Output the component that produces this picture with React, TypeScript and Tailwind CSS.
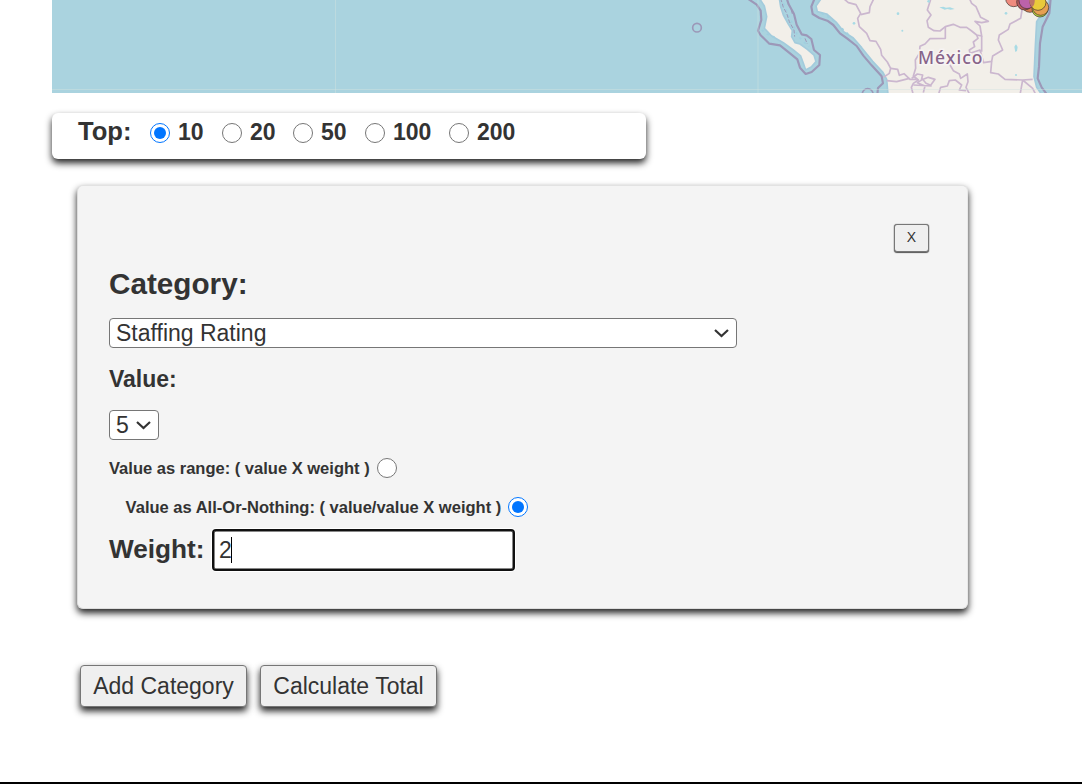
import type { ReactNode } from "react";

const border = { fill: "none", stroke: "#cbb7cf", strokeWidth: 5, strokeLinejoin: "round" } as const;
const coast = { fill: "none", stroke: "#9c98b8", strokeWidth: 6.5, strokeLinejoin: "round" } as const;

function MapStrip() {
  return (
    <svg className="block h-[93px] w-[1030px] bg-[#aad3df]" viewBox="52 0 1030 93">
      <g transform="translate(680 0) scale(0.33333)">
        <g stroke="#a3cbdc" strokeWidth="5" fill="#f2efe9" strokeLinejoin="round">
          <path d="M238 -5L253 18L260 50L253 85L275 108L310 128L340 150L362 168L370 190L377 210L395 200L408 185L402 165L382 148L360 132L345 128L335 110L337 92L325 72L310 45L302 20L298 -5Z" />
          <path d="M424 -5L408 18L412 35L440 42L470 68L492 96L520 114L545 143L578 184L608 216L620 238L624 285L1086 285L1070 262L1062 230L1066 140L1070 65L1105 10L1105 -5Z" />
        </g>
        <g fill="none" stroke="#9fcfdf" strokeWidth="5" strokeDasharray="7 12">
          <path d="M310 10L325 45L340 75L352 105L370 125L388 140" />
          <path d="M425 40L452 55L480 80L510 108" />
          <path d="M245 90L262 103L285 112" />
        </g>
        <path {...coast} d="M202 -5L230 14L242 32L244 60L234 92L242 106L268 131L300 136L330 160L352 178L360 203L377 222L395 216L418 195L420 165L402 150L394 117L380 106L365 103L350 74L342 42L326 13L320 -5" />
        <path {...coast} strokeWidth={3} strokeDasharray="12 5" d="M302 -5L310 22L320 40L328 65L342 90L344 110M334 30L338 46M375 115L382 132" />
        <path {...coast} d="M404 -5L394 20L398 42L418 54L442 62L460 75L480 100L502 116L530 138L550 167L575 196L605 229L609 250L594 264L592 285" />
        <path {...coast} d="M1112 -5L1108 40L1088 80L1080 130L1077 200L1073 235L1085 262L1102 285" />
        <circle {...coast} strokeWidth={5} cx="51" cy="83" r="13" />
        <circle {...coast} strokeWidth={5} cx="563" cy="282" r="16" />
        <path {...border} d="M490 -5L505 8L528 14L542 40L533 55L538 80L560 100L570 122L588 124L602 148L605 166L622 186L632 205L628 220L610 232" />
        <path {...border} d="M582 -5L570 20L568 38L542 44M632 205L653 208L658 226L672 221L690 238L710 238" />
        <path {...border} d="M753 -5L742 30L753 45L741 62L745 82L762 92L780 93L796 80L820 73L840 82L860 82L875 93L890 105L905 108L900 78L885 64L905 68L925 64L902 52L888 20L875 10L868 -5" />
        <path {...border} d="M796 80L796 115L750 116L735 132L720 139L718 160L706 180L707 205L700 228L715 240L700 250L694 262L700 285" />
        <path {...border} d="M890 105L894 115L880 126L884 140L868 150L870 160L900 150L911 188L935 184L938 168L968 150L955 120L958 105L985 88L990 72L1022 55L1026 30L1000 -5" />
        <path {...border} d="M905 108L905 155M935 184L932 218L955 222L975 238L1028 240L1058 238M1028 240L1020 285M1028 240L1058 265L1068 285" />
        <path {...border} d="M810 195L820 212L838 222L842 235L862 222L864 245L858 262L870 285M775 285L782 262L802 258L808 242L826 240L845 255L838 270L858 272" />
        <path {...border} d="M695 235L712 222L728 225L724 240L745 232L765 238L752 256L738 250L728 238L712 248L735 258L730 278M700 255L755 258M620 242L650 245L688 235" />
        <g fill="#a8dbe5">
          <path d="M778 22l12-2 8 3 12-1 14 5-12 2-10-2-8 2zM1003 140l5-7 5 8-2 12-5 3z" />
          <circle cx="654" cy="41" r="4" /><circle cx="667" cy="92" r="3" /><circle cx="746" cy="4" r="4" />
          <circle cx="978" cy="40" r="4" /><circle cx="1008" cy="225" r="3" /><circle cx="522" cy="70" r="4" />
        </g>
        <g stroke="#3d302a" strokeWidth="2">
          <circle cx="1050" cy="12" r="25" fill="#d77c52" />
          <circle cx="1080" cy="27" r="24" fill="#b8d53e" />
          <circle cx="1001" cy="-4" r="24" fill="#ef8b7e" />
          <circle cx="1034" cy="6" r="24" fill="#b65a60" />
          <circle cx="1082" cy="22" r="24" fill="#e6a052" />
          <circle cx="1041" cy="2" r="24" fill="#bc62aa" />
          <circle cx="1074" cy="7" r="24" fill="#e9ca3b" />
          <path d="M1051 -10Q1043 8 1056 22Q1066 14 1064 -5Z" fill="#bd7665" stroke="none" />
        </g>
      </g>
      <path d="M52 89.5H1082M335.5 0V93M758 0V93" stroke="#d3e2df" strokeOpacity=".45" fill="none" />
      <text x="918" y="63.5" textLength="64.5" fontFamily="Noto Sans" fontSize="17.5" fontWeight="500" fill="#87648a" stroke="#f7f4f3" strokeWidth="3" paintOrder="stroke">México</text>
    </svg>
  );
}

function Radio({ name, checked, className = "" }: { name: string; checked?: boolean; className?: string }) {
  return <input type="radio" name={name} defaultChecked={checked} className={`m-0 size-5 shrink-0 ${className}`} />;
}

function Select({ value, className }: { value: string; className: string }) {
  return (
    <div className={`relative h-[30px] ${className}`}>
      <select defaultValue={value} className="block h-full w-full appearance-none rounded-[4px] border border-[#767676] bg-white pl-[6px] text-[23px] leading-[28px] text-[#333] outline-none">
        <option>{value}</option>
      </select>
      <svg className="pointer-events-none absolute top-[10px] right-[8px] h-[10px] w-[15px]" viewBox="0 0 15 10" fill="none" stroke="#333" strokeWidth="2.2">
        <path d="M1 2L7.5 8L14 2" />
      </svg>
    </div>
  );
}

function Button({ className, children }: { className: string; children: ReactNode }) {
  return (
    <button className={`h-[42px] rounded-[4px] border border-[#767676] bg-[#efefef] pb-px text-[23px] leading-[26px] whitespace-nowrap shadow-[0_4px_7px_#222] ${className}`}>
      {children}
    </button>
  );
}

const tops = [
  { n: "10", w: "w-[72px]" },
  { n: "20", w: "w-[71px]" },
  { n: "50", w: "w-[72px]" },
  { n: "100", w: "w-[84px]" },
  { n: "200", w: "w-[84px]" },
];

export default function App() {
  return (
    <div className="flex h-[784px] w-[1082px] flex-col overflow-hidden border-b-2 border-black bg-white font-['Liberation_Sans',Arial,sans-serif] text-[#333]">
      <div className="shrink-0 pl-[52px]">
        <MapStrip />
      </div>
      <div className="mt-5 ml-[52px] flex h-[46px] w-[594px] shrink-0 items-start rounded-[6px] bg-white pt-[3px] pl-[26px] font-bold shadow-[0_4px_7px_#222]">
        <span className="w-[72px] text-[25.6px] leading-[30px]">Top:</span>
        {tops.map((t) => (
          <label key={t.n} className={`flex h-8 items-center text-[23px] ${t.w}`}>
            <Radio name="top" checked={t.n === "10"} className="mt-px mr-2" />
            <span>{t.n}</span>
          </label>
        ))}
      </div>
      <section className="mt-[26px] ml-[77px] flex h-[424px] w-[891px] shrink-0 flex-col rounded-[6px] border border-t-[#e2e2e2] border-r-[#e8e8e8] border-b-[#ddd] border-l-[#ddd] bg-[#f4f4f4] pr-[38px] pl-[31px] shadow-[0_4px_7px_#222]">
        <button className="mt-[38px] h-[28px] w-[35px] self-end rounded-[3px] border border-[#777] bg-[#efefef] pb-[3px] text-[14px] leading-[20px] shadow-[0_1px_1px_#555,0_0_1px_#555]">X</button>
        <h2 className="mt-[14px] text-[29.7px] leading-[36px] font-bold">Category:</h2>
        <Select value="Staffing Rating" className="mt-[16px] w-[628px] shrink-0" />
        <h3 className="mt-[18px] text-[23px] leading-[26px] font-bold">Value:</h3>
        <Select value="5" className="mt-[18px] w-[50px] shrink-0" />
        <label className="mt-[18px] flex h-5 items-center gap-[7.5px] text-[16.52px] leading-5 font-bold whitespace-nowrap">
          <span className="pt-[2px]">Value as range: ( value X weight )</span>
          <Radio name="mode" />
        </label>
        <label className="mt-[19px] ml-[16.6px] flex h-5 items-center gap-[7px] text-[16.52px] leading-5 font-bold whitespace-nowrap">
          <span className="pt-[2px]">Value as All-Or-Nothing: ( value/value X weight )</span>
          <Radio name="mode" checked />
        </label>
        <div className="mt-[11px] flex h-[43px] items-center">
          <span className="-mt-[2px] w-[103px] text-[26.2px] leading-[30px] font-bold">Weight:</span>
          <div className="relative h-[42px] w-[303px]">
            <input defaultValue="2" className="block h-full w-full rounded-[4px] border-2 border-[#101010] bg-white pt-px pl-[5px] text-[23px] text-[#333] shadow-[0_0_0_1px_#fff,inset_0_0_0_0.5px_#101010] outline-none" />
            <span className="absolute top-[8px] left-[19px] h-[26px] w-px bg-black" />
          </div>
        </div>
      </section>
      <div className="mt-[56px] ml-[80px] flex gap-[13px]">
        <Button className="w-[167px]">Add Category</Button>
        <Button className="w-[177px]">Calculate Total</Button>
      </div>
    </div>
  );
}
